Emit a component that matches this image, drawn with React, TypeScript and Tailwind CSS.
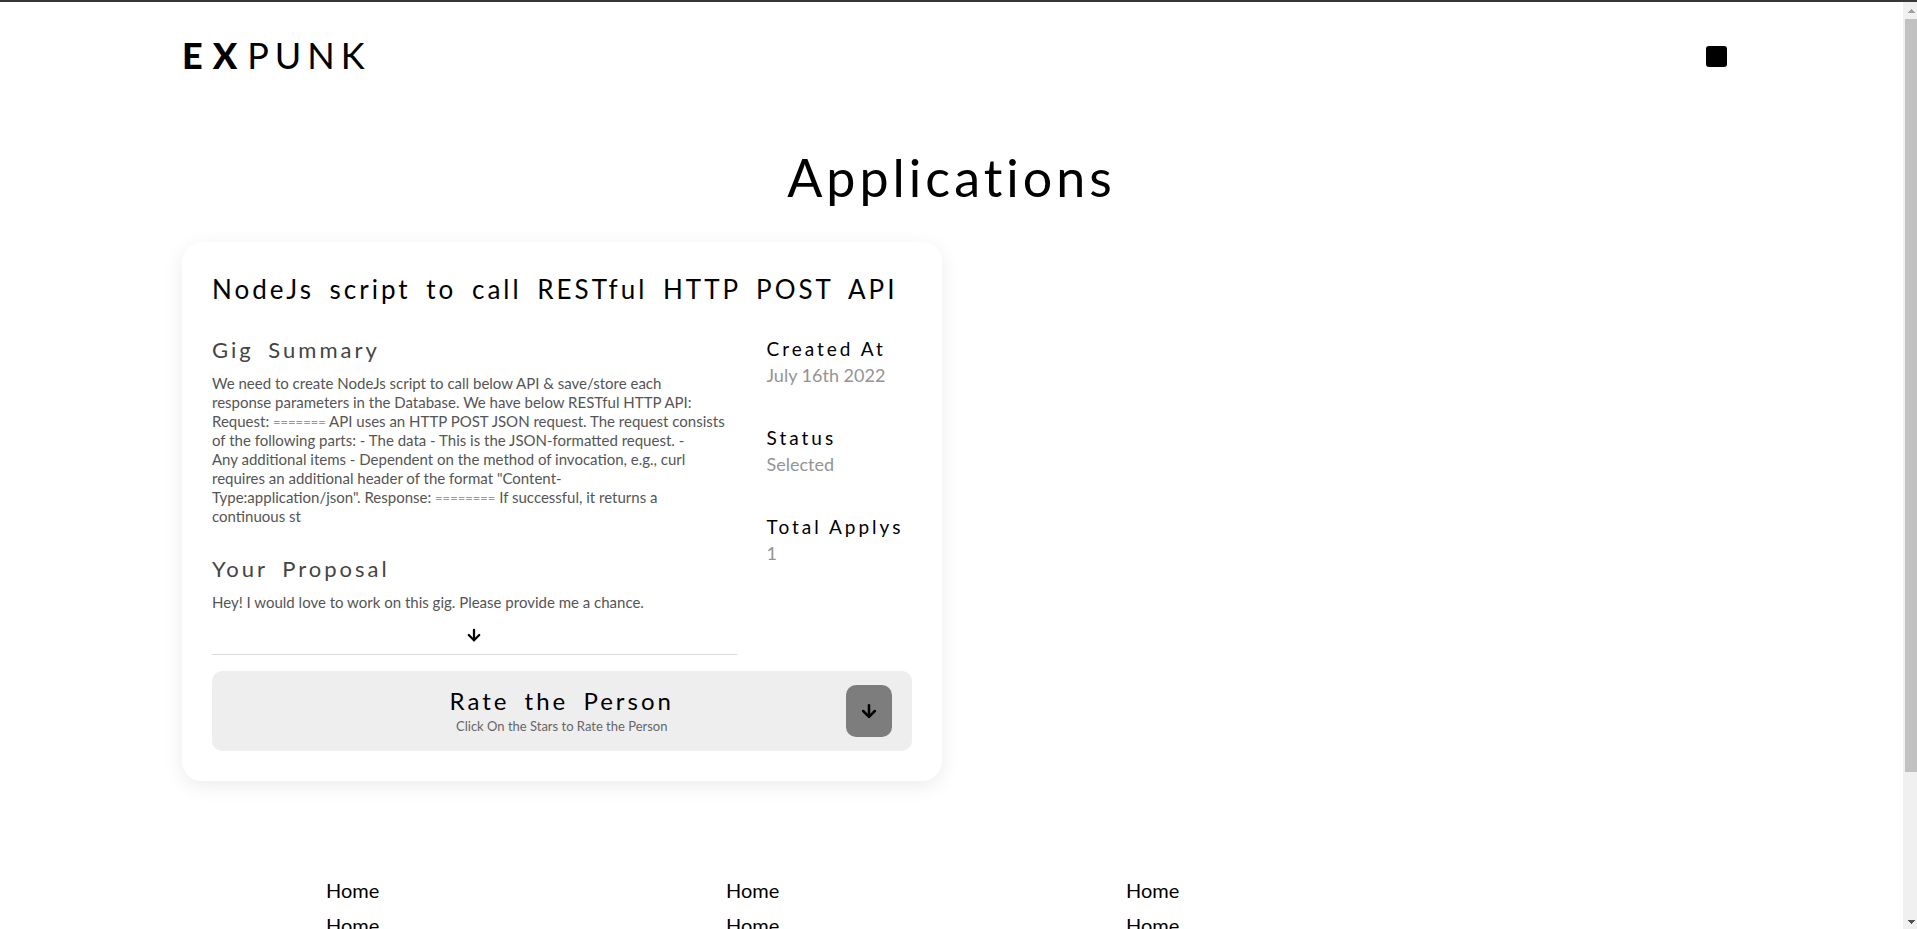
import type { ReactNode } from "react";
import { ArrowDown } from "lucide-react";

const facts = [
  { label: "Created At", value: "July 16th 2022" },
  { label: "Status", value: "Selected" },
  { label: "Total Applys", value: "1" },
];

const footerColumns = [
  ["Home", "Home"],
  ["Home", "Home"],
  ["Home", "Home"],
];

function Header() {
  return (
    <header className="flex items-center justify-between pt-8">
      <a href="#" className="text-4xl leading-[42px]">
        <span className="font-black tracking-[10px]">EX</span>
        <span className="tracking-[6px]">PUNK</span>
      </a>
      <button type="button" aria-label="Menu" className="mt-0.5 -mr-[6px] size-[21px] rounded-[3px] bg-black" />
    </header>
  );
}

function Section({ title, children }: { title: string; children: ReactNode }) {
  return (
    <section>
      <h3 className="text-[22px] leading-7 tracking-[3px] text-[#444] [word-spacing:6px]">{title}</h3>
      <p className="mt-[10px] text-[15px] leading-[19px] text-[#555]">{children}</p>
    </section>
  );
}

function Rule({ children }: { children: string }) {
  return <span className="text-[13px] leading-none text-[#999]">{children}</span>;
}

function ApplicationCard() {
  return (
    <article className="rounded-[20px] bg-white p-[30px] shadow-[0_5px_20px_rgba(0,0,0,0.08)]">
      <h2 className="text-[26px] leading-[34px] tracking-[3px] [word-spacing:6px]">
        NodeJs script to call RESTful HTTP POST API
      </h2>
      <div className="mt-[30px] grid grid-cols-[3fr_minmax(145px,0.8fr)] gap-[30px]">
        <div>
          <div className="flex flex-col gap-[29px]">
            <Section title="Gig Summary">
              We need to create NodeJs script to call below API &amp; save/store each
              <br />
              response parameters in the Database. We have below RESTful HTTP API:
              <br />
              Request: <Rule>=======</Rule> API uses an HTTP POST JSON request. The request consists
              <br />
              of the following parts: - The data - This is the JSON-formatted request. -
              <br />
              Any additional items - Dependent on the method of invocation, e.g., curl
              <br />
              requires an additional header of the format "Content-
              <br />
              Type:application/json". Response: <Rule>========</Rule> If successful, it returns a
              <br />
              continuous st
            </Section>
            <Section title="Your Proposal">
              Hey! I would love to work on this gig. Please provide me a chance.
            </Section>
          </div>
          <button
            type="button"
            aria-label="Show more"
            className="mt-2 flex h-[35px] w-full items-center justify-center border-b border-[#d9d9d9] pb-1"
          >
            <ArrowDown size={18} strokeWidth={3} />
          </button>
        </div>
        <dl className="flex flex-col gap-[37px]">
          {facts.map((fact) => (
            <div key={fact.label}>
              <dt className="text-[19px] leading-[26px] tracking-[3px] whitespace-nowrap">{fact.label}</dt>
              <dd className="text-lg leading-[26px] text-[#949494]">{fact.value}</dd>
            </div>
          ))}
        </dl>
      </div>
      <div className="mt-4 grid grid-cols-[46px_1fr_46px] items-center rounded-[10px] bg-[#eee] px-5 py-[14px]">
        <div className="col-start-2 pt-0.5 text-center">
          <h3 className="text-2xl leading-7 tracking-[3px] [word-spacing:6px]">Rate the Person</h3>
          <p className="text-[13px] leading-[22px] text-[#666]">Click On the Stars to Rate the Person</p>
        </div>
        <button
          type="button"
          aria-label="Open rating"
          className="flex h-[52px] w-[46px] items-center justify-center rounded-[10px] bg-[#7d7d7d]"
        >
          <ArrowDown size={20} strokeWidth={3} />
        </button>
      </div>
    </article>
  );
}

function Footer() {
  return (
    <footer className="mt-24 grid grid-cols-[repeat(3,400px)] pl-36">
      {footerColumns.map((links, column) => (
        <ul key={column} className="flex flex-col gap-[9px]">
          {links.map((link, row) => (
            <li key={row} className="text-xl leading-[26px]">
              <a href="#">{link}</a>
            </li>
          ))}
        </ul>
      ))}
    </footer>
  );
}

function ScrollTrack() {
  return (
    <div aria-hidden="true" className="flex w-[14px] shrink-0 flex-col items-center bg-[#f0f0f0] pl-0.5">
      <svg viewBox="0 0 7 4" className="mt-[7px] mb-[6px] h-1 w-[7px] shrink-0 fill-[#a0a0a0]">
        <path d="M3 0h1v1h1v1h1v1h1v1H0V3h1V2h1V1h1z" />
      </svg>
      <div className="w-full grow-[84] bg-[#c1c1c1]" />
      <div className="grow-[16]" />
      <svg viewBox="0 0 7 4" className="my-[5px] h-1 w-[7px] shrink-0 fill-[#505050]">
        <path d="M0 0h7v1H6v1H5v1H4v1H3V3H2V2H1V1H0z" />
      </svg>
    </div>
  );
}

export default function App() {
  return (
    <div className="flex h-screen overflow-hidden border-t-2 border-[#3a3637] bg-white font-['Lato',sans-serif] text-black">
      <div className="min-w-0 flex-1">
        <div className="mx-auto w-[81%] max-w-[1539px]">
          <Header />
          <main>
            <h1 className="mt-16 text-center text-[52px] leading-[74px] tracking-[4px]">Applications</h1>
            <div className="mt-7 grid grid-cols-2 gap-5">
              <ApplicationCard />
            </div>
          </main>
          <Footer />
        </div>
      </div>
      <ScrollTrack />
    </div>
  );
}
